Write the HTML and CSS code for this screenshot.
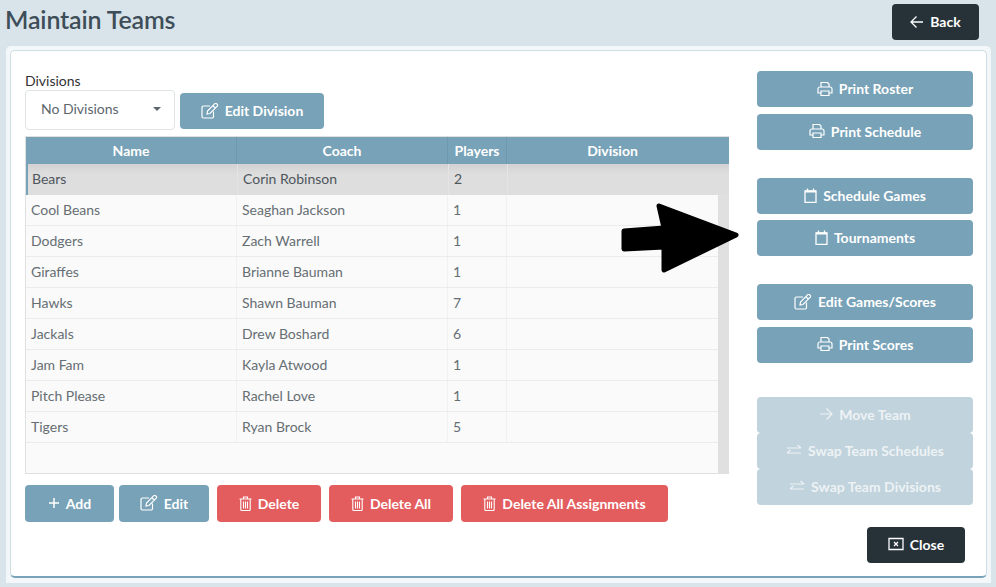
FILE: index.html
```html
<!DOCTYPE html>
<html lang="en">
<head>
<meta charset="utf-8">
<title>Maintain Teams</title>
<link rel="stylesheet" href="styles.css">
</head>
<body>
<svg class="defs" width="0" height="0" aria-hidden="true">
  <symbol id="i-print" viewBox="0 0 16 16"><path d="M4 6V1.500h6.500L12 3v3M1 8a2 2 0 0 1 2-2h10a2 2 0 0 1 2 2v4h-3M4 12H1V8M4 10h8v4.500H4z" fill="none" stroke="currentColor" stroke-width="1.200"/></symbol>
  <symbol id="i-edit" viewBox="0 0 18 16"><path d="M12.500 8.500v5a1.500 1.500 0 0 1-1.500 1.500H2.500A1.500 1.500 0 0 1 1 13.500v-9A1.500 1.500 0 0 1 2.500 3H9M6.500 8 6 11l3-.5 7.300-7.300a1.200 1.200 0 0 0 0-1.700l-.8-.8a1.200 1.200 0 0 0-1.700 0zM12 3l2.800 2.200" fill="none" stroke="currentColor" stroke-width="1.200"/></symbol>
  <symbol id="i-cal" viewBox="0 0 13 15"><path d="M1 3h11v11.300H1zM3.500.5v3M9.500.5v3" fill="none" stroke="currentColor" stroke-width="1.300"/><path d="M1 2.500h11v2H1z" fill="currentColor"/></symbol>
  <symbol id="i-trash" viewBox="0 0 13 15"><path d="M.5 3h12M1.800 3v10.500a1 1 0 0 0 1 1h7.400a1 1 0 0 0 1-1V3M4.500 3V1h4v2M4.500 5.500v7M6.500 5.500v7M8.500 5.500v7" fill="none" stroke="currentColor" stroke-width="1.100"/></symbol>
  <symbol id="i-swap" viewBox="0 0 16 14"><path d="M1 4.500h14M11.500 1.500l3.500 3M15 9.500H1M4.500 6.500l-3.500 3" transform="translate(0 .5)" fill="none" stroke="currentColor" stroke-width="1.200"/></symbol>
  <symbol id="i-arrow" viewBox="0 0 14 14"><path d="M1 7h12M7.500 1.500 13 7l-5.500 5.500" fill="none" stroke="currentColor" stroke-width="1.200"/></symbol>
  <symbol id="i-back" viewBox="0 0 14 14"><path d="M13 7H1M6.500 1.500 1 7l5.500 5.500" fill="none" stroke="currentColor" stroke-width="1.300"/></symbol>
  <symbol id="i-plus" viewBox="0 0 12 12"><path d="M6 1v10M1 6h10" fill="none" stroke="currentColor" stroke-width="1.500"/></symbol>
  <symbol id="i-close" viewBox="0 0 16 14"><path d="M1 1.500h14v11H1zM6 5l4 4M10 5 6 9" fill="none" stroke="currentColor" stroke-width="1.300"/></symbol>
</svg>

<header class="page-header">
  <h1 class="page-title">Maintain Teams</h1>
  <button class="btn btn-dark btn-back"><svg class="ico ico-14"><use href="#i-back"/></svg>Back</button>
</header>

<div class="panel">
  <main class="card">
    <section class="left">
      <label class="field-label">Divisions</label>
      <div class="division-row">
        <div class="select">No Divisions<span class="caret"></span></div>
        <button class="btn btn-blue btn-edit-division"><svg class="ico ico-18"><use href="#i-edit"/></svg>Edit Division</button>
      </div>

      <div class="table">
        <div class="row head">
          <div class="cell">Name</div><div class="cell">Coach</div><div class="cell">Players</div><div class="cell">Division</div>
        </div>
        <div class="body">
          <div class="row selected"><div class="cell">Bears</div><div class="cell">Corin Robinson</div><div class="cell">2</div><div class="cell"></div></div>
          <div class="row"><div class="cell">Cool Beans</div><div class="cell">Seaghan Jackson</div><div class="cell">1</div><div class="cell"></div></div>
          <div class="row"><div class="cell">Dodgers</div><div class="cell">Zach Warrell</div><div class="cell">1</div><div class="cell"></div></div>
          <div class="row"><div class="cell">Giraffes</div><div class="cell">Brianne Bauman</div><div class="cell">1</div><div class="cell"></div></div>
          <div class="row"><div class="cell">Hawks</div><div class="cell">Shawn Bauman</div><div class="cell">7</div><div class="cell"></div></div>
          <div class="row"><div class="cell">Jackals</div><div class="cell">Drew Boshard</div><div class="cell">6</div><div class="cell"></div></div>
          <div class="row"><div class="cell">Jam Fam</div><div class="cell">Kayla Atwood</div><div class="cell">1</div><div class="cell"></div></div>
          <div class="row"><div class="cell">Pitch Please</div><div class="cell">Rachel Love</div><div class="cell">1</div><div class="cell"></div></div>
          <div class="row"><div class="cell">Tigers</div><div class="cell">Ryan Brock</div><div class="cell">5</div><div class="cell"></div></div>
        </div>
      </div>

      <div class="actions">
        <button class="btn btn-blue w-add"><svg class="ico ico-12"><use href="#i-plus"/></svg>Add</button>
        <button class="btn btn-blue w-edit"><svg class="ico ico-18"><use href="#i-edit"/></svg>Edit</button>
        <button class="btn btn-red w-del"><svg class="ico ico-tall"><use href="#i-trash"/></svg>Delete</button>
        <button class="btn btn-red w-delall"><svg class="ico ico-tall"><use href="#i-trash"/></svg>Delete All</button>
        <button class="btn btn-red w-delassign"><svg class="ico ico-tall"><use href="#i-trash"/></svg>Delete All Assignments</button>
      </div>
    </section>

    <aside class="right">
      <div class="group">
        <button class="btn btn-blue"><svg class="ico ico-16"><use href="#i-print"/></svg>Print Roster</button>
        <button class="btn btn-blue"><svg class="ico ico-16"><use href="#i-print"/></svg>Print Schedule</button>
      </div>
      <div class="group">
        <button class="btn btn-blue"><svg class="ico ico-tall"><use href="#i-cal"/></svg>Schedule Games</button>
        <button class="btn btn-blue"><svg class="ico ico-tall"><use href="#i-cal"/></svg>Tournaments</button>
      </div>
      <div class="group">
        <button class="btn btn-blue"><svg class="ico ico-18"><use href="#i-edit"/></svg>Edit Games/Scores</button>
        <button class="btn btn-blue"><svg class="ico ico-16"><use href="#i-print"/></svg>Print Scores</button>
      </div>
      <div class="group group-tight">
        <button class="btn btn-disabled"><svg class="ico ico-14"><use href="#i-arrow"/></svg>Move Team</button>
        <button class="btn btn-disabled"><svg class="ico ico-16"><use href="#i-swap"/></svg>Swap Team Schedules</button>
        <button class="btn btn-disabled"><svg class="ico ico-16"><use href="#i-swap"/></svg>Swap Team Divisions</button>
      </div>
      <button class="btn btn-dark btn-close"><svg class="ico ico-16"><use href="#i-close"/></svg>Close</button>
    </aside>
  </main>
</div>

<svg class="pointer" viewBox="0 0 130 80" aria-hidden="true">
  <path d="M14 31 54 28 49 6 126 35 54 70 54 47 14 49Z" fill="#000" stroke="#000" stroke-width="5" stroke-linejoin="round"/>
</svg>
</body>
</html>
```

FILE: styles.css
```css
* { box-sizing: border-box; }

html, body { height: 587px; }

body {
  margin: 0;
  overflow: hidden;
  position: relative;
  background: #d9e4ea;
  font-family: Lato, "Liberation Sans", sans-serif;
  color: #666e73;
}

.defs { position: absolute; }

.page-header {
  height: 46px;
  display: flex;
  justify-content: space-between;
  align-items: flex-start;
  padding: 4px 17px 0 5px;
}

.page-title {
  margin: 0;
  font-size: 25px;
  font-weight: 600;
  letter-spacing: -0.15px;
  line-height: 31px;
  color: #3e4e59;
}

.btn {
  display: flex;
  align-items: center;
  justify-content: center;
  gap: 6px;
  height: 36px;
  padding: 0 0 1px;
  border: 0;
  border-radius: 4px;
  font-family: inherit;
  font-size: 14px;
  font-weight: 700;
  color: #fff;
}

.btn-blue { background: #78a2b7; }
.btn-red { background: #e35d5f; }
.btn-dark { background: #263238; }
.btn-disabled { background: #c1d3dc; color: #edf2f5; }

.btn-back { width: 87px; }

.ico { flex: none; }
.ico-12 { width: 12px; height: 12px; }
.ico-14 { width: 14px; height: 14px; }
.ico-16 { width: 16px; height: 16px; }
.ico-18 { width: 18px; height: 16px; }
.ico-tall { width: 13px; height: 15px; }

.panel {
  margin-left: 6px;
  width: 985px;
  height: 537px;
  padding: 4px;
  background: #f3f7f9;
  border-radius: 5px 5px 0 0;
}

.card {
  height: 528px;
  width: 977px;
  display: flex;
  gap: 28px;
  padding: 20px 14px 0 14px;
  background: #fff;
  border: 1px solid #cfdde4;
  border-bottom: 2px solid #78a2b7;
  border-radius: 5px;
}

.left { width: 704px; flex: none; }

.field-label {
  display: block;
  font-size: 14px;
  line-height: 18px;
  margin-top: 1px;
  color: #333;
}

.division-row {
  display: flex;
  align-items: center;
  gap: 5px;
  margin-bottom: 6px;
}

.select {
  width: 150px;
  height: 40px;
  display: flex;
  align-items: center;
  padding: 0 0 4px 15px;
  position: relative;
  background: #fff;
  border: 1px solid #dfe3e6;
  border-radius: 4px;
  font-size: 14px;
  color: #5c666c;
}

.caret {
  position: absolute;
  right: 13px;
  top: 16px;
  border-left: 4px solid transparent;
  border-right: 4px solid transparent;
  border-top: 4px solid #5c666c;
}

.btn-edit-division { width: 144px; margin-top: 2px; }

.table {
  height: 338px;
  border: 1px solid #e0e0e0;
  border-right: 0;
  display: flex;
  flex-direction: column;
  background: #fafafa;
  font-size: 14px;
}

.row {
  display: grid;
  grid-template-columns: 211px 211px 59px 211px;
  width: 692px;
  height: 31px;
  border-bottom: 1px solid #ececec;
}

.row .cell {
  display: flex;
  align-items: center;
  padding: 0 0 2px 5px;
  border-right: 1px solid #f1f1f1;
}

.row .cell:last-child { border-right: 0; }

.head {
  flex: none;
  width: 703px;
  height: 27px;
  grid-template-columns: 211px 211px 59px 211px 11px;
  background: #78a2b7;
  border: 0;
  color: #fff;
  font-weight: 700;
}

.head .cell {
  justify-content: center;
  padding: 0;
  border-right: 1px solid #6f98ac;
}

.body {
  flex: 1;
  background: linear-gradient(to right, #fafafa 692px, #e0e0e0 692px);
}

.row.selected {
  width: 703px;
  background: linear-gradient(to bottom, #d2d2d2, #dedede 10px);
  border-left: 2px solid #78a2b7;
  border-bottom: 0;
  grid-template-columns: 210px 211px 59px 220px;
  color: #4d565c;
}

.row.selected .cell { border-right-color: #e4e4e4; }
.row.selected .cell:first-child { padding-left: 4px; }

.actions {
  display: flex;
  margin-top: 11px;
}

.actions .btn { height: 37px; }

.w-add { width: 89px; margin-right: 5px; }
.w-edit { width: 90px; margin-right: 8px; }
.w-del { width: 104px; margin-right: 8px; }
.w-delall { width: 124px; margin-right: 8px; }
.w-delassign { width: 207px; }

.right {
  width: 216px;
  flex: none;
  display: flex;
  flex-direction: column;
  gap: 28px;
}

.group {
  display: flex;
  flex-direction: column;
  gap: 6.500px;
}

.group-tight { gap: 0; margin-top: 6px; }

.btn-close {
  width: 98px;
  align-self: flex-end;
  margin-right: 8px;
  margin-top: -6px;
}

.pointer {
  position: absolute;
  left: 610px;
  top: 200px;
  width: 130px;
  height: 80px;
}
```
